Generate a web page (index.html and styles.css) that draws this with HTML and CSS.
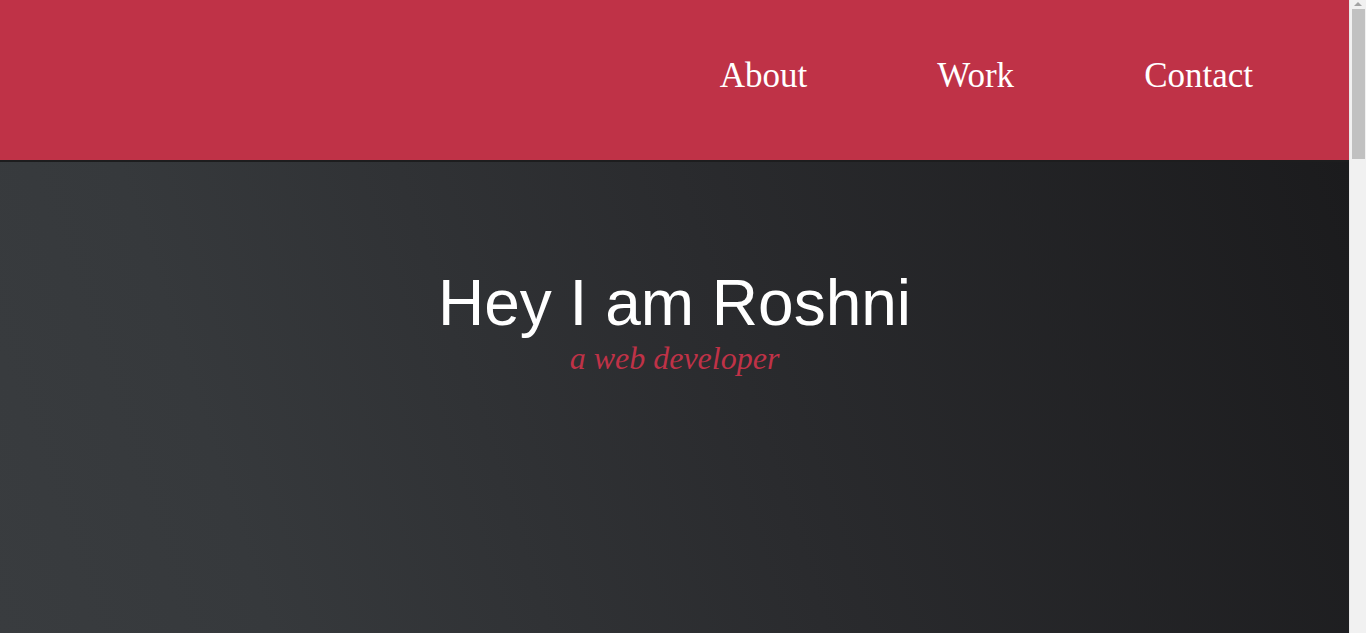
FILE: index.html
```html
<!DOCTYPE html>
<html lang="en">
<head>
<meta charset="utf-8">
<title>Roshni</title>
<link rel="stylesheet" href="styles.css">
</head>
<body>
<header class="site-header">
  <nav class="nav">
    <a class="nav-link" href="#about">About</a>
    <a class="nav-link" href="#work">Work</a>
    <a class="nav-link" href="#contact">Contact</a>
  </nav>
</header>
<main>
  <section class="hero">
    <h1 class="hero-title">Hey I am Roshni</h1>
    <p class="hero-subtitle">a web developer</p>
  </section>
  <section class="more" id="about"></section>
</main>
<div class="scrollbar" aria-hidden="true">
  <div class="scrollbar-arrow"></div>
  <div class="scrollbar-thumb"></div>
</div>
</body>
</html>
```

FILE: styles.css
```css
html, body {
  margin: 0;
  padding: 0;
}
body {
  font-family: "Liberation Serif", "Times New Roman", serif;
  background: #1e1e20;
  padding-right: 17px;
}
.site-header {
  background: #bf3247;
  height: 160px;
  border-bottom: 2px solid #1d1d1e;
  display: flex;
  align-items: center;
  justify-content: flex-end;
  padding-right: 96px;
}
.nav {
  display: flex;
  gap: 130px;
  margin-top: -8px;
}
.nav-link {
  color: #ffffff;
  text-decoration: none;
  font-family: "Liberation Serif", "Times New Roman", serif;
  font-size: 35px;
}
.hero {
  height: 472px;
  box-sizing: border-box;
  padding-top: 104px;
  text-align: center;
  background: linear-gradient(72deg, #393c3f 0%, #36393c 18%, #2a2b2e 55%, #1b1b1d 100%);
}
.hero-title {
  margin: 0;
  font-family: "Liberation Sans", Arial, sans-serif;
  font-weight: normal;
  font-size: 64px;
  color: #ffffff;
}
.hero-subtitle {
  margin: 0;
  font-family: "Liberation Serif", "Times New Roman", serif;
  font-style: italic;
  font-size: 32px;
  color: #bf3247;
}
.more {
  height: 1900px;
  background: #1e1e20;
}
.scrollbar {
  position: fixed;
  top: 0;
  right: 0;
  width: 17px;
  height: 100vh;
  background: #f1f1f1;
  border-left: 1px solid #e8e8e8;
  box-sizing: border-box;
}
.scrollbar-arrow {
  position: absolute;
  top: 2px;
  left: 4px;
  width: 0;
  height: 0;
  border-left: 4px solid transparent;
  border-right: 4px solid transparent;
  border-bottom: 4px solid #a3a3a3;
}
.scrollbar-thumb {
  position: absolute;
  top: 9px;
  left: 2px;
  width: 13px;
  height: 150px;
  background: #c1c1c1;
}
```
